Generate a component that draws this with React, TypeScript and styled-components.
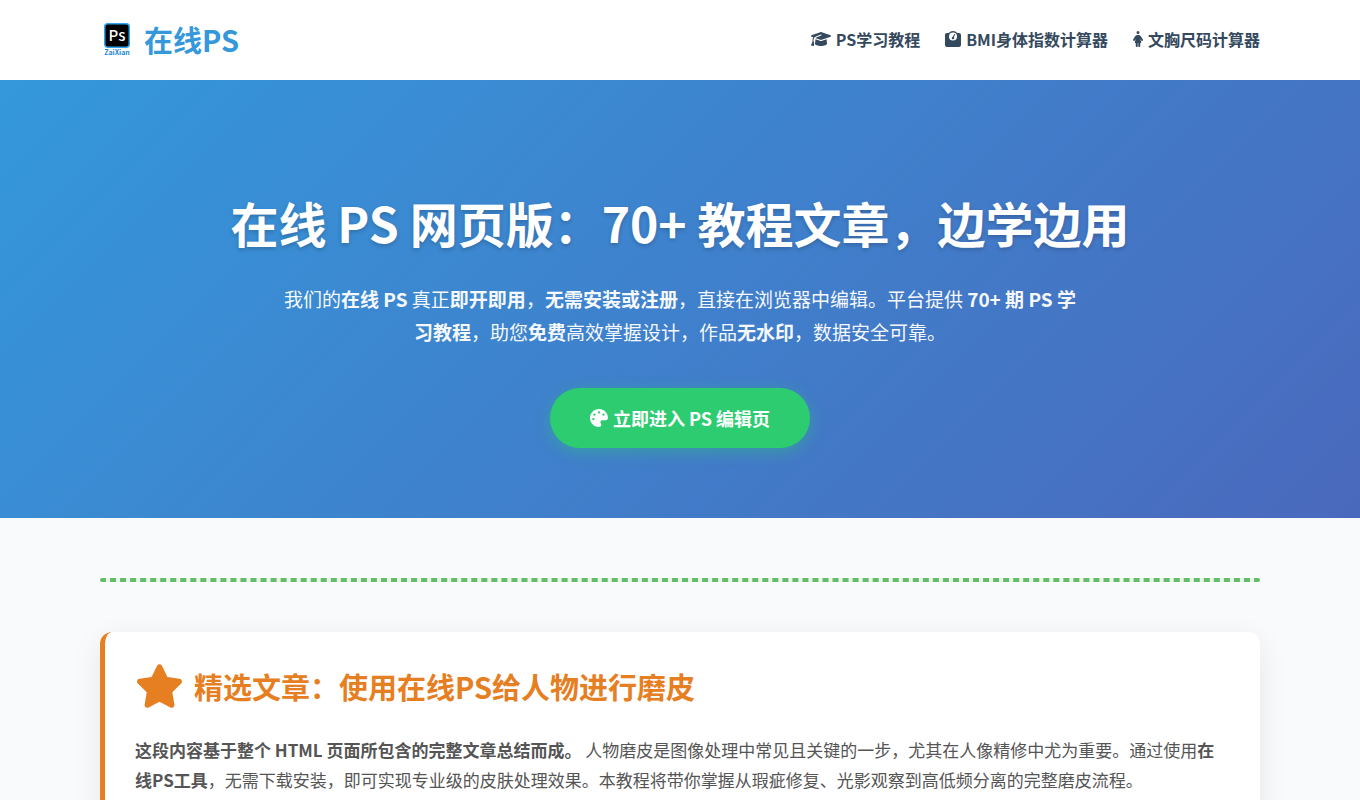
import React from 'react';
import styled, { createGlobalStyle } from 'styled-components';
import { FaGraduationCap, FaWeightScale, FaPersonDress, FaPalette, FaStar } from 'react-icons/fa6';

const GlobalStyle = createGlobalStyle`
  *, *::before, *::after { box-sizing: border-box; }
  body {
    margin: 0;
    background: #f9fafc;
    color: #555;
    font-family: "Noto Sans CJK SC", "Noto Sans", sans-serif;
    font-size: 17px;
    line-height: 30px;
  }
`;

const Container = styled.div`
  max-width: 1200px;
  margin: 0 auto;
  padding: 0 20px;
`;

const Header = styled.header`
  background: #fff;
  box-shadow: 0 2px 10px rgba(0, 0, 0, 0.1);
`;

const HeaderRow = styled(Container)`
  display: flex;
  align-items: center;
  justify-content: space-between;
  padding-top: 16px;
  padding-bottom: 18px;
`;

const Brand = styled.a`
  display: flex;
  align-items: center;
  gap: 10px;
  color: #3498db;
  font-size: 29px;
  font-weight: 700;
  line-height: 46px;
  text-decoration: none;
`;

const Nav = styled.nav`
  display: flex;
  gap: 25px;
`;

const NavLink = styled.a<{ $iconWidth: number }>`
  display: flex;
  align-items: center;
  gap: 5px;
  color: #34495e;
  font-size: 16px;
  font-weight: 700;
  line-height: 26px;
  text-decoration: none;

  svg {
    flex: none;
    width: ${({ $iconWidth }) => $iconWidth}px;
    height: 16px;
  }
`;

const Hero = styled.section`
  padding: 100px 20px 70px;
  background: linear-gradient(135deg, #3498db, #4a69bd);
  color: #fff;
  text-align: center;
`;

const HeroTitle = styled.h1`
  margin: 0 0 18px;
  font-size: 48px;
  font-weight: 700;
  line-height: 84px;
  text-shadow: 0 2px 4px rgba(0, 0, 0, 0.2);
`;

const HeroText = styled.p`
  max-width: 800px;
  margin: 0 auto 40px;
  font-size: 19px;
  font-weight: 400;
  line-height: 33px;
  opacity: 0.95;
`;

const StartButton = styled.button`
  display: inline-flex;
  align-items: center;
  gap: 5px;
  height: 60px;
  padding: 0 40px;
  border: 0;
  border-radius: 50px;
  background: #2ecc71;
  box-shadow: 0 4px 15px rgba(46, 204, 113, 0.4);
  color: #fff;
  font-family: inherit;
  font-size: 18px;
  font-weight: 700;
  line-height: 30px;
  vertical-align: top;
  cursor: pointer;
`;

const Main = styled(Container).attrs({ as: 'main' })`
  padding-top: 60px;
  padding-bottom: 60px;
`;

const Divider = styled.hr`
  height: 4px;
  margin: 0 0 50px;
  border: 2px dashed #66bb6a;
  border-radius: 2px;
  background: #e8f5e9;
`;

const Article = styled.article`
  padding: 30px;
  border-left: 5px solid #e67e22;
  border-radius: 12px;
  background: #fff;
  box-shadow: 0 8px 30px rgba(0, 0, 0, 0.08);
`;

const ArticleTitle = styled.h2`
  display: flex;
  align-items: center;
  gap: 10px;
  margin: 0 0 25px;
  color: #e67e22;
  font-size: 29px;
  font-weight: 700;
  line-height: 48px;
`;

const StarIcon = styled(FaStar)`
  flex: none;
  width: 49px;
  height: 44px;
`;

const ArticleText = styled.p`
  margin: 0;
`;

const LogoMark = () => (
  <svg width="34" height="38" viewBox="0 0 34 38" role="img" aria-label="在线PS">
    <rect x="4.75" y="3.75" width="24.5" height="23.5" rx="3" fill="#000" stroke="#2fa3ee" strokeWidth="1.5" />
    <text x="17" y="21" textAnchor="middle" fill="#fff" fontFamily="'Noto Sans CJK SC', sans-serif" fontSize="15" fontWeight="500">Ps</text>
    <text x="17" y="35" textAnchor="middle" fill="#2589d6" fontFamily="'Noto Sans CJK SC', sans-serif" fontSize="7" fontWeight="700">ZaiXian</text>
  </svg>
);

const navItems = [
  { label: 'PS学习教程', Icon: FaGraduationCap, width: 20 },
  { label: 'BMI身体指数计算器', Icon: FaWeightScale, width: 16 },
  { label: '文胸尺码计算器', Icon: FaPersonDress, width: 10 },
];

export default function App() {
  return (
    <>
      <GlobalStyle />
      <Header>
        <HeaderRow>
          <Brand href="#">
            <LogoMark />
            在线PS
          </Brand>
          <Nav>
            {navItems.map(({ label, Icon, width }) => (
              <NavLink href="#" key={label} $iconWidth={width}>
                <Icon />
                {label}
              </NavLink>
            ))}
          </Nav>
        </HeaderRow>
      </Header>
      <Hero>
        <HeroTitle>在线 PS 网页版：70+ 教程文章，边学边用</HeroTitle>
        <HeroText>
          我们的<strong>在线 PS</strong> 真正<strong>即开即用</strong>，<strong>无需安装或注册</strong>，直接在浏览器中编辑。平台提供 <strong>70+ 期 PS 学习教程</strong>，助您<strong>免费</strong>高效掌握设计，作品<strong>无水印</strong>，数据安全可靠。
        </HeroText>
        <StartButton type="button">
          <FaPalette />
          立即进入 PS 编辑页
        </StartButton>
      </Hero>
      <Main>
        <Divider />
        <Article>
          <ArticleTitle>
            <StarIcon />
            精选文章：使用在线PS给人物进行磨皮
          </ArticleTitle>
          <ArticleText>
            <strong>这段内容基于整个 HTML 页面所包含的完整文章总结而成。</strong> 人物磨皮是图像处理中常见且关键的一步，尤其在人像精修中尤为重要。通过使用<strong>在线PS工具</strong>，无需下载安装，即可实现专业级的皮肤处理效果。本教程将带你掌握从瑕疵修复、光影观察到高低频分离的完整磨皮流程。
          </ArticleText>
        </Article>
      </Main>
    </>
  );
}
